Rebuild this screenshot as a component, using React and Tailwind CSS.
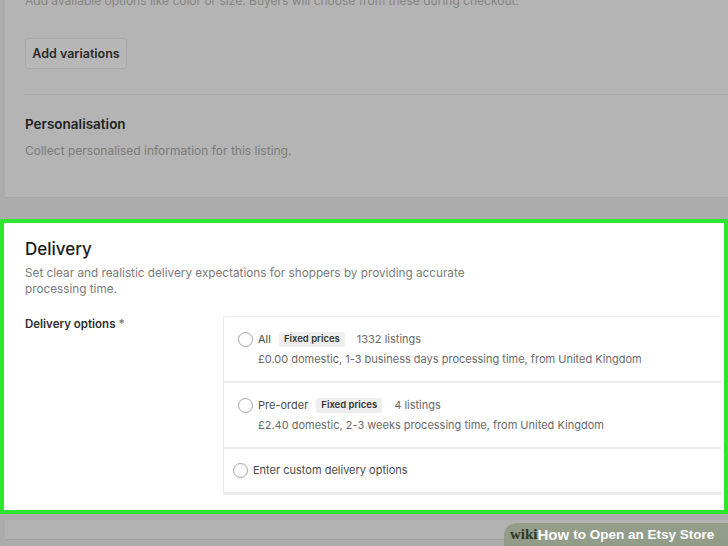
const Radio = () => (
  <span className="block w-[15px] h-[15px] shrink-0 rounded-full border-[1.5px] border-[#a3a3a3] bg-white" />
);

const Badge = ({ children }) => (
  <span className="px-[5px] h-[15px] flex items-center rounded-[3px] bg-[#eeeeee] text-[9.5px] font-semibold text-[#333]">
    {children}
  </span>
);

const options = [
  {
    name: 'All',
    count: '1332 listings',
    detail: '£0.00 domestic, 1-3 business days processing time, from United Kingdom',
  },
  {
    name: 'Pre-order',
    count: '4 listings',
    detail: '£2.40 domestic, 2-3 weeks processing time, from United Kingdom',
  },
];

export default function App() {
  return (
    <div
      className="w-[728px] h-[546px] overflow-hidden relative bg-[#adacac] flex flex-col"
      style={{ fontFamily: 'Inter, "Noto Sans", sans-serif' }}
    >
      {/* dimmed section above */}
      <div className="ml-[5px] h-[198px] shrink-0 bg-[#b4b4b4] border-b border-[#a6a6a6] pl-5 overflow-hidden">
        <p className="-mt-[7px] text-[12px] leading-[16px] text-[#858585] whitespace-nowrap">
          Add available options like color or size. Buyers will choose from these during checkout.
        </p>
        <button className="mt-[29px] h-[31px] w-[102px] rounded-[3px] border border-[#a9a9a9] bg-[#b7b7b7] pt-[2px] text-[12.5px] font-semibold text-[#2a2a2a]">
          Add variations
        </button>
        <div className="mt-[25px] border-t border-[#aaaaaa]" />
        <h3 className="mt-[20px] text-[13.5px] leading-[18px] font-semibold text-[#1f1f1f]">Personalisation</h3>
        <p className="mt-[10px] text-[12px] leading-[16px] text-[#7b7b7b]">
          Collect personalised information for this listing.
        </p>
      </div>

      {/* highlighted delivery section */}
      <div className="mt-[21px] h-[295px] shrink-0 border-4 border-[#2fe62f] bg-white pl-[21px] pr-[3px]">
        <h2 className="mt-[15px] text-[17px] leading-[22px] font-medium text-[#1c1c1c]">Delivery</h2>
        <p className="mt-[5px] w-[460px] text-[11.75px] leading-[16px] text-[#7a7a7a]">
          Set clear and realistic delivery expectations for shoppers by providing accurate processing time.
        </p>
        <div className="mt-[19px] flex">
          <div className="w-[198px] text-[11.5px] font-semibold text-[#2f2f2f]">
            Delivery options <span className="text-[#777]">*</span>
          </div>
          <div className="flex-1 border border-[#ececec] border-r-0 rounded-l-[2px]">
            {options.map((o) => (
              <div key={o.name} className="h-[66px] pl-[14px] pt-[14px] border-b-2 border-[#ebebeb]">
                <div className="flex items-center h-[16px]">
                  <Radio />
                  <span className="ml-[5px] text-[11px] text-[#4a4a4a]">{o.name}</span>
                  <span className="ml-[8px]">
                    <Badge>Fixed prices</Badge>
                  </span>
                  <span className="ml-[12px] text-[11px] text-[#6a6a6a]">{o.count}</span>
                </div>
                <p className="mt-[3px] ml-[20px] text-[11px] leading-[18px] text-[#6a6a6a]">{o.detail}</p>
              </div>
            ))}
            <div className="h-[45px] pl-[9px] flex items-center border-b-2 border-[#ebebeb]">
              <Radio />
              <span className="ml-[5px] text-[11px] text-[#4a4a4a]">Enter custom delivery options</span>
            </div>
          </div>
        </div>
      </div>

      {/* dimmed section below */}
      <div className="mt-[6px] ml-[5px] h-[20px] shrink-0 bg-[#b2b2b2] border-b border-[#a3a3a3]" />

      {/* watermark */}
      <div className="absolute right-0 bottom-0 h-[23px] w-[224px] rounded-tl-[12px] bg-[#8f9a85]/90 flex items-center pl-[6px] whitespace-nowrap">
        <span
          className="text-[15px] font-bold text-[#2f3a2a] leading-none"
          style={{ fontFamily: '"Liberation Serif", serif' }}
        >
          wiki
        </span>
        <span
          className="text-[15px] font-bold text-white leading-none"
          style={{ fontFamily: '"Liberation Sans", sans-serif' }}
        >
          How
        </span>
        <span
          className="ml-[4px] text-[13.5px] font-bold text-white leading-none"
          style={{ fontFamily: '"Liberation Sans", sans-serif' }}
        >
          to Open an Etsy Store
        </span>
      </div>
    </div>
  );
}
